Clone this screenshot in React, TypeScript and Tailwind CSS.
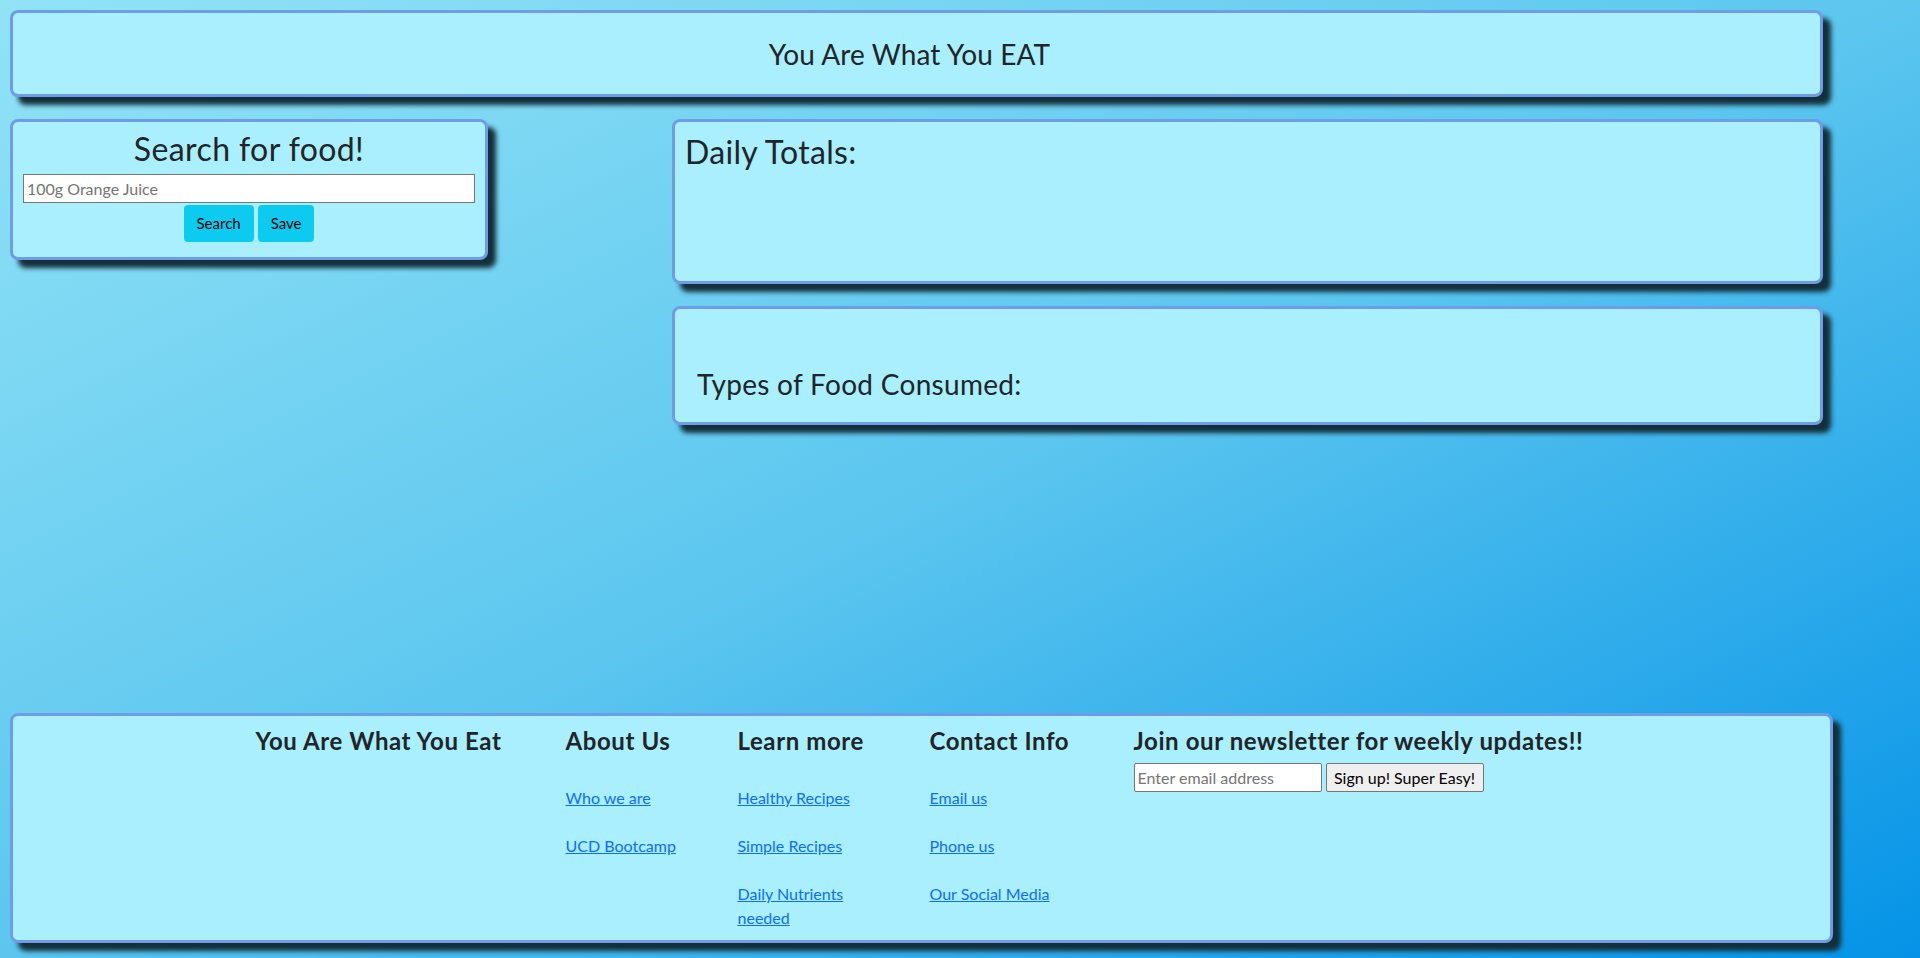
const box = "rounded-lg border-[3px] border-[#6e9ce6] bg-[#a9effd] shadow-[8px_8px_5px_#132f3a]";

function LinkList({ items, width }: { items: string[]; width: string }) {
  return (
    <ul className={`mt-[31px] flex flex-col gap-[24px] ${width}`}>
      {items.map((t) => (
        <li key={t} className="leading-[24px]">
          <a href="#" className="text-[#0d6efd] underline">
            {t}
          </a>
        </li>
      ))}
    </ul>
  );
}

const footHead = "text-[24px] leading-[29px] font-bold tracking-[0.6px]";

export default function App() {
  return (
    <div className="min-h-[958px] flex flex-col bg-[linear-gradient(to_bottom_right,#92e3f6,#5cc6ef_50%,#0593e7)] text-[#212529] font-['Lato','Noto_Sans',sans-serif]">
      <header className={`${box} ml-[10px] mt-[10px] w-[1813px] h-[87px] flex items-center justify-center pr-[14px]`}>
        <h1 className="text-[28px] leading-[34px] tracking-[0.1px]">You Are What You EAT</h1>
      </header>

      <div className="flex items-start ml-[10px] mt-[22px]">
        <section className={`${box} w-[478px] px-[10px] pt-[8px] pb-[15px] flex flex-col items-center`}>
          <h2 className="text-[32px] leading-[38px] mb-[6px] tracking-[0.4px]">Search for food!</h2>
          <input
            placeholder="100g Orange Juice"
            className="w-full h-[29px] bg-white border border-[#767676] px-[3px] text-[16px] placeholder:text-[#757575] outline-none"
          />
          <div className="flex gap-[4px] mt-[2px]">
            <button className="h-[37px] px-[13px] rounded-[4px] bg-[#0dcaf0] text-[15px] text-black">Search</button>
            <button className="h-[37px] px-[13px] rounded-[4px] bg-[#0dcaf0] text-[15px] text-black">Save</button>
          </div>
        </section>

        <div className="ml-[184px] flex flex-col gap-[22px]">
          <section className={`${box} w-[1151px] h-[165px] px-[10px] pt-[11px]`}>
            <h2 className="text-[32px] leading-[38px] tracking-[0.3px]">Daily Totals:</h2>
          </section>
          <section className={`${box} w-[1151px] h-[119px] px-[22px] pt-[58px]`}>
            <h3 className="text-[28px] leading-[34px] tracking-[0.3px]">Types of Food Consumed:</h3>
          </section>
        </div>
      </div>

      <footer className={`${box} ml-[10px] mt-auto mb-[15px] w-[1823px] h-[230px] pt-[10px] flex justify-center`}>
        <div className="w-[310px]">
          <h4 className={footHead}>You Are What You Eat</h4>
        </div>
        <div className="w-[172px]">
          <h4 className={footHead}>About Us</h4>
          <LinkList items={["Who we are", "UCD Bootcamp"]} width="w-[150px]" />
        </div>
        <div className="w-[192px]">
          <h4 className={footHead}>Learn more</h4>
          <LinkList items={["Healthy Recipes", "Simple Recipes", "Daily Nutrients needed"]} width="w-[125px]" />
        </div>
        <div className="w-[204px]">
          <h4 className={footHead}>Contact Info</h4>
          <LinkList items={["Email us", "Phone us", "Our Social Media"]} width="w-[180px]" />
        </div>
        <div className="w-[454px]">
          <h4 className={`${footHead} whitespace-nowrap`}>Join our newsletter for weekly updates!!</h4>
          <div className="flex gap-[4px] mt-[8px]">
            <input
              placeholder="Enter email address"
              className="w-[188px] h-[29px] bg-white border border-[#767676] rounded-[2px] px-[3px] text-[16px] placeholder:text-[#757575] outline-none"
            />
            <button className="w-[158px] h-[29px] bg-[#efefef] border border-[#767676] rounded-[2px] text-[16px] text-black">
              Sign up! Super Easy!
            </button>
          </div>
        </div>
      </footer>
    </div>
  );
}
